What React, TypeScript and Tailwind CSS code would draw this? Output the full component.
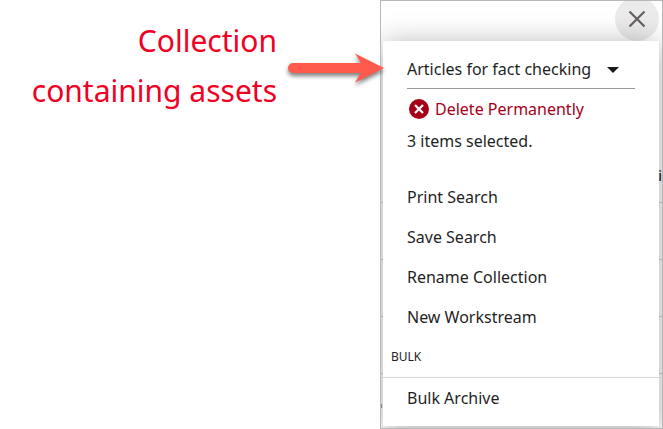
const actions = [
  "Print Search",
  "Save Search",
  "Rename Collection",
  "New Workstream",
];

const bulkActions = ["Bulk Archive"];

function Arrow() {
  return (
    <svg
      width="104"
      height="40"
      viewBox="0 0 104 40"
      aria-hidden="true"
      className="relative z-10 mt-12 -mr-1 shrink-0 drop-shadow-[0_3px_2px_rgba(0,0,0,0.5)]"
    >
      <path
        d="M13 15H81L75 5.5L104 20L75 34.5L81 25H13A5 5 0 0 1 13 15Z"
        fill="#ff5a4b"
      />
    </svg>
  );
}

function CollectionSelect() {
  return (
    <div className="relative mr-6 ml-6 border-b border-[#999999]">
      <select
        aria-label="Collection"
        className="block h-[39px] w-full appearance-none bg-transparent pr-8 outline-none"
      >
        <option>Articles for fact checking</option>
      </select>
      <svg
        width="12"
        height="6"
        viewBox="0 0 12 6"
        aria-hidden="true"
        className="pointer-events-none absolute top-[18px] right-4"
      >
        <path d="M0 0H12L6 6Z" fill="#1a1a1a" />
      </svg>
    </div>
  );
}

function ActionButton({ label }: { label: string }) {
  return (
    <button
      type="button"
      className="block h-10 w-full px-6 text-left hover:bg-gray-100"
    >
      {label}
    </button>
  );
}

// The result list that stays underneath the open menu
function ListBehind() {
  return (
    <div aria-hidden="true" className="absolute inset-0 pt-36">
      <div className="h-[58px] border-b border-[#d4d4d4] pt-[21px] text-right text-sm">
        <span className="font-medium">i</span>
      </div>
      <div className="h-[57px] border-b border-[#d4d4d4]" />
      <div className="h-[57px] border-b border-[#d4d4d4]" />
      <div className="h-[57px] border-b border-[#d4d4d4]" />
      <div className="mt-[30px] h-1 w-px bg-slate-400" />
    </div>
  );
}

export default function App() {
  return (
    <main className="flex items-start justify-end bg-white font-['Noto_Sans',sans-serif] text-base text-[#1f1f1f]">
      <p className="flex-1 pt-4 pr-[3px] text-right text-3xl leading-[50px] text-[#f00023]">
        Collection
        <br />
        containing assets
      </p>

      <Arrow />

      <section className="relative w-[283px] shrink-0 overflow-hidden border border-[#b8b8b8] bg-white">
        <ListBehind />

        <div className="relative flex h-10 items-end justify-end pr-[3px]">
          <button
            type="button"
            aria-label="Close"
            className="flex size-11 shrink-0 items-center justify-center rounded-full bg-[#ebebeb] text-[#666161]"
          >
            <svg width="18" height="18" viewBox="0 0 18 18" fill="none">
              <path
                d="M1.5 1.5L16.5 16.5M16.5 1.5L1.5 16.5"
                stroke="currentColor"
                strokeWidth="2.2"
              />
            </svg>
          </button>
        </div>

        <div className="relative mr-[3px] mb-[2px] ml-[2px] bg-white pt-2 pb-2 shadow-[0_4px_28px_rgba(0,0,0,0.34)]">
          <CollectionSelect />

          <button
            type="button"
            className="flex h-10 w-full items-center gap-1 px-6 text-[#a50019]"
          >
            <svg width="24" height="24" viewBox="0 0 24 24" aria-hidden="true">
              <circle cx="12" cy="12" r="10" fill="currentColor" />
              <path
                d="M8 8L16 16M16 8L8 16"
                stroke="#ffffff"
                strokeWidth="2.2"
              />
            </svg>
            Delete Permanently
          </button>

          <p className="mb-6 px-6 leading-6">3 items selected.</p>

          {actions.map((label) => (
            <ActionButton key={label} label={label} />
          ))}

          <h2 className="flex h-[41px] items-center border-b border-[#d6d6d6] px-2 text-xs">
            BULK
          </h2>

          {bulkActions.map((label) => (
            <ActionButton key={label} label={label} />
          ))}
        </div>
      </section>
    </main>
  );
}
